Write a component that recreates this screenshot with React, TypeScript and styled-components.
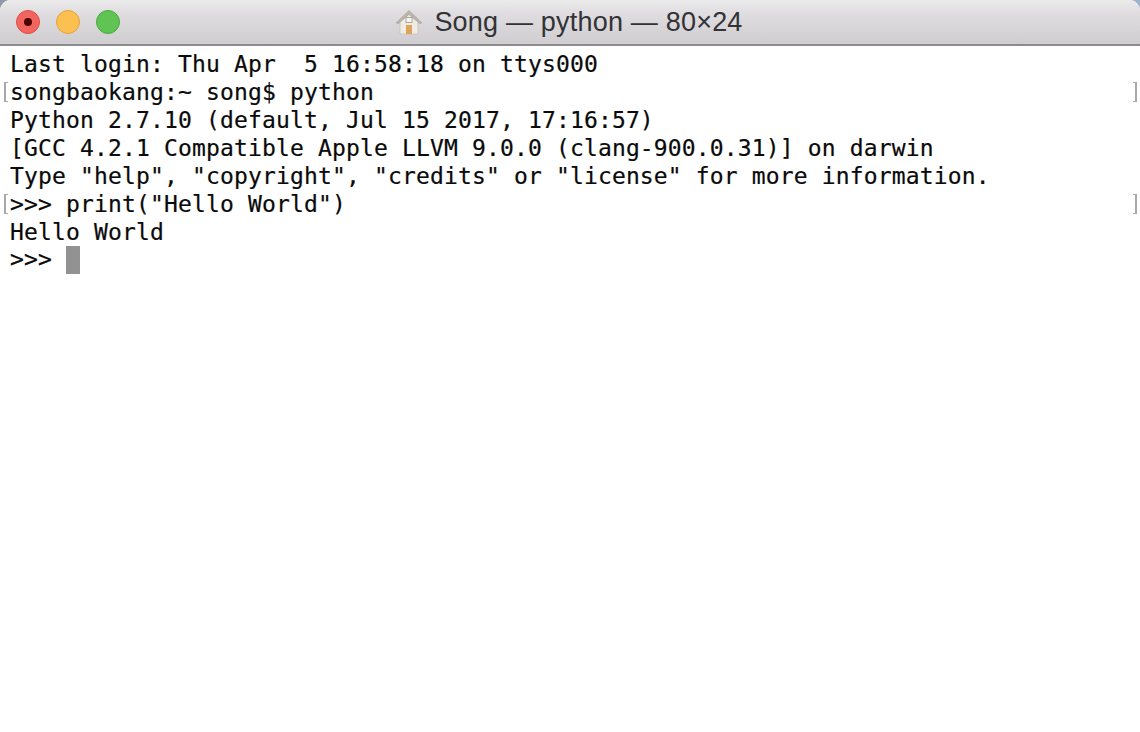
import styled, { createGlobalStyle } from 'styled-components';

const GlobalStyle = createGlobalStyle`
	html, body {
		margin: 0;
		padding: 0;
		background: #ffffff;
	}
`;

const Page = styled.div`
	width: 1140px;
	height: 732px;
	overflow: hidden;
	background: linear-gradient(90deg, #8e9aa8, #9fb2d0);
`;

const Window = styled.div`
	display: flex;
	flex-direction: column;
	height: 100%;
	background: #ffffff;
	border-radius: 11px 11px 0 0;
	overflow: hidden;
`;

const TitleBar = styled.header`
	display: grid;
	grid-template-columns: 1fr auto 1fr;
	align-items: center;
	height: 46px;
	box-sizing: border-box;
	padding: 0 16px;
	flex: none;
	background: linear-gradient(180deg, #ecebec 0%, #dfdddf 30%, #cfcdcf 100%);
	border-bottom: 2px solid #8c8c8c;
`;

const Lights = styled.div`
	display: flex;
	gap: 16px;
`;

const Light = styled.span<{ $fill: string; $edge: string }>`
	display: flex;
	align-items: center;
	justify-content: center;
	width: 24px;
	height: 24px;
	box-sizing: border-box;
	border-radius: 50%;
	background: ${({ $fill }) => $fill};
	border: 1px solid ${({ $edge }) => $edge};
`;

const CloseDot = styled.span`
	width: 8px;
	height: 8px;
	border-radius: 50%;
	background: #4d0000;
`;

const Title = styled.div`
	display: flex;
	align-items: center;
	gap: 11px;
	margin-left: -2px;
	font-family: 'Liberation Sans', Arial, sans-serif;
	font-size: 27px;
	letter-spacing: 0.2px;
	color: #333236;
	white-space: nowrap;
`;

const Screen = styled.main`
	flex: 1;
	padding-top: 4px;
	font-family: 'DejaVu Sans Mono', monospace;
	font-size: 23px;
	letter-spacing: 0.15px;
	color: #0a0a0a;
	-webkit-text-stroke: 0.2px #0a0a0a;
`;

const Line = styled.div`
	display: flex;
	align-items: center;
	height: 28px;
	padding-left: 4px;
	padding-right: 3px;
`;

const Mark = styled.span<{ $side?: 'left' | 'right' }>`
	flex: none;
	width: 4px;
	height: 20px;
	box-sizing: border-box;
	border: solid #a8a8a8;
	border-width: ${({ $side }) => ($side === 'right' ? '1px 2px 1px 0' : '1px 0 1px 2px')};
`;

const Text = styled.span<{ $marked?: boolean }>`
	flex: 1;
	white-space: pre;
	margin-left: ${({ $marked }) => ($marked ? '2px' : '6px')};
`;

const Cursor = styled.span`
	display: inline-block;
	width: 14px;
	height: 28px;
	background: #929292;
	vertical-align: top;
`;

const HomeIcon = () => (
	<svg width='28' height='26' viewBox='0 0 28 26'>
		<path d='M5 12 L5 25 L23 25 L23 12 L14 4 Z' fill='#f0ebe3' stroke='#c4bfb7' strokeWidth='0.8' />
		<path d='M1 14 L14 1.5 L27 14 L24.5 14.5 L14 5.5 L3.5 14.5 Z' fill='#b9b5ad' stroke='#a8a49d' strokeWidth='0.6' />
		<rect x='11' y='16' width='6' height='9' fill='#dca45c' />
		<rect x='11' y='8.5' width='6' height='5' fill='#f8f6f2' stroke='#a3a098' strokeWidth='0.9' />
	</svg>
);

const lines = [
	{ text: 'Last login: Thu Apr  5 16:58:18 on ttys000' },
	{ text: 'songbaokang:~ song$ python', marked: true },
	{ text: 'Python 2.7.10 (default, Jul 15 2017, 17:16:57)' },
	{ text: '[GCC 4.2.1 Compatible Apple LLVM 9.0.0 (clang-900.0.31)] on darwin' },
	{ text: 'Type "help", "copyright", "credits" or "license" for more information.' },
	{ text: '>>> print("Hello World")', marked: true },
	{ text: 'Hello World' },
];

const App = () => (
	<Page>
		<GlobalStyle />
		<Window>
			<TitleBar>
				<Lights>
					<Light $fill='#f2655f' $edge='#dd4f49'>
						<CloseDot />
					</Light>
					<Light $fill='#fbc04f' $edge='#e3a33a' />
					<Light $fill='#5fc454' $edge='#4aa93f' />
				</Lights>
				<Title>
					<HomeIcon />
					Song — python — 80×24
				</Title>
			</TitleBar>
			<Screen>
				{lines.map(({ text, marked }) => (
					<Line key={text}>
						{marked && <Mark />}
						<Text $marked={marked}>{text}</Text>
						{marked && <Mark $side='right' />}
					</Line>
				))}
				<Line>
					<Text>
						{'>>> '}
						<Cursor />
					</Text>
				</Line>
			</Screen>
		</Window>
	</Page>
);

export default App;
